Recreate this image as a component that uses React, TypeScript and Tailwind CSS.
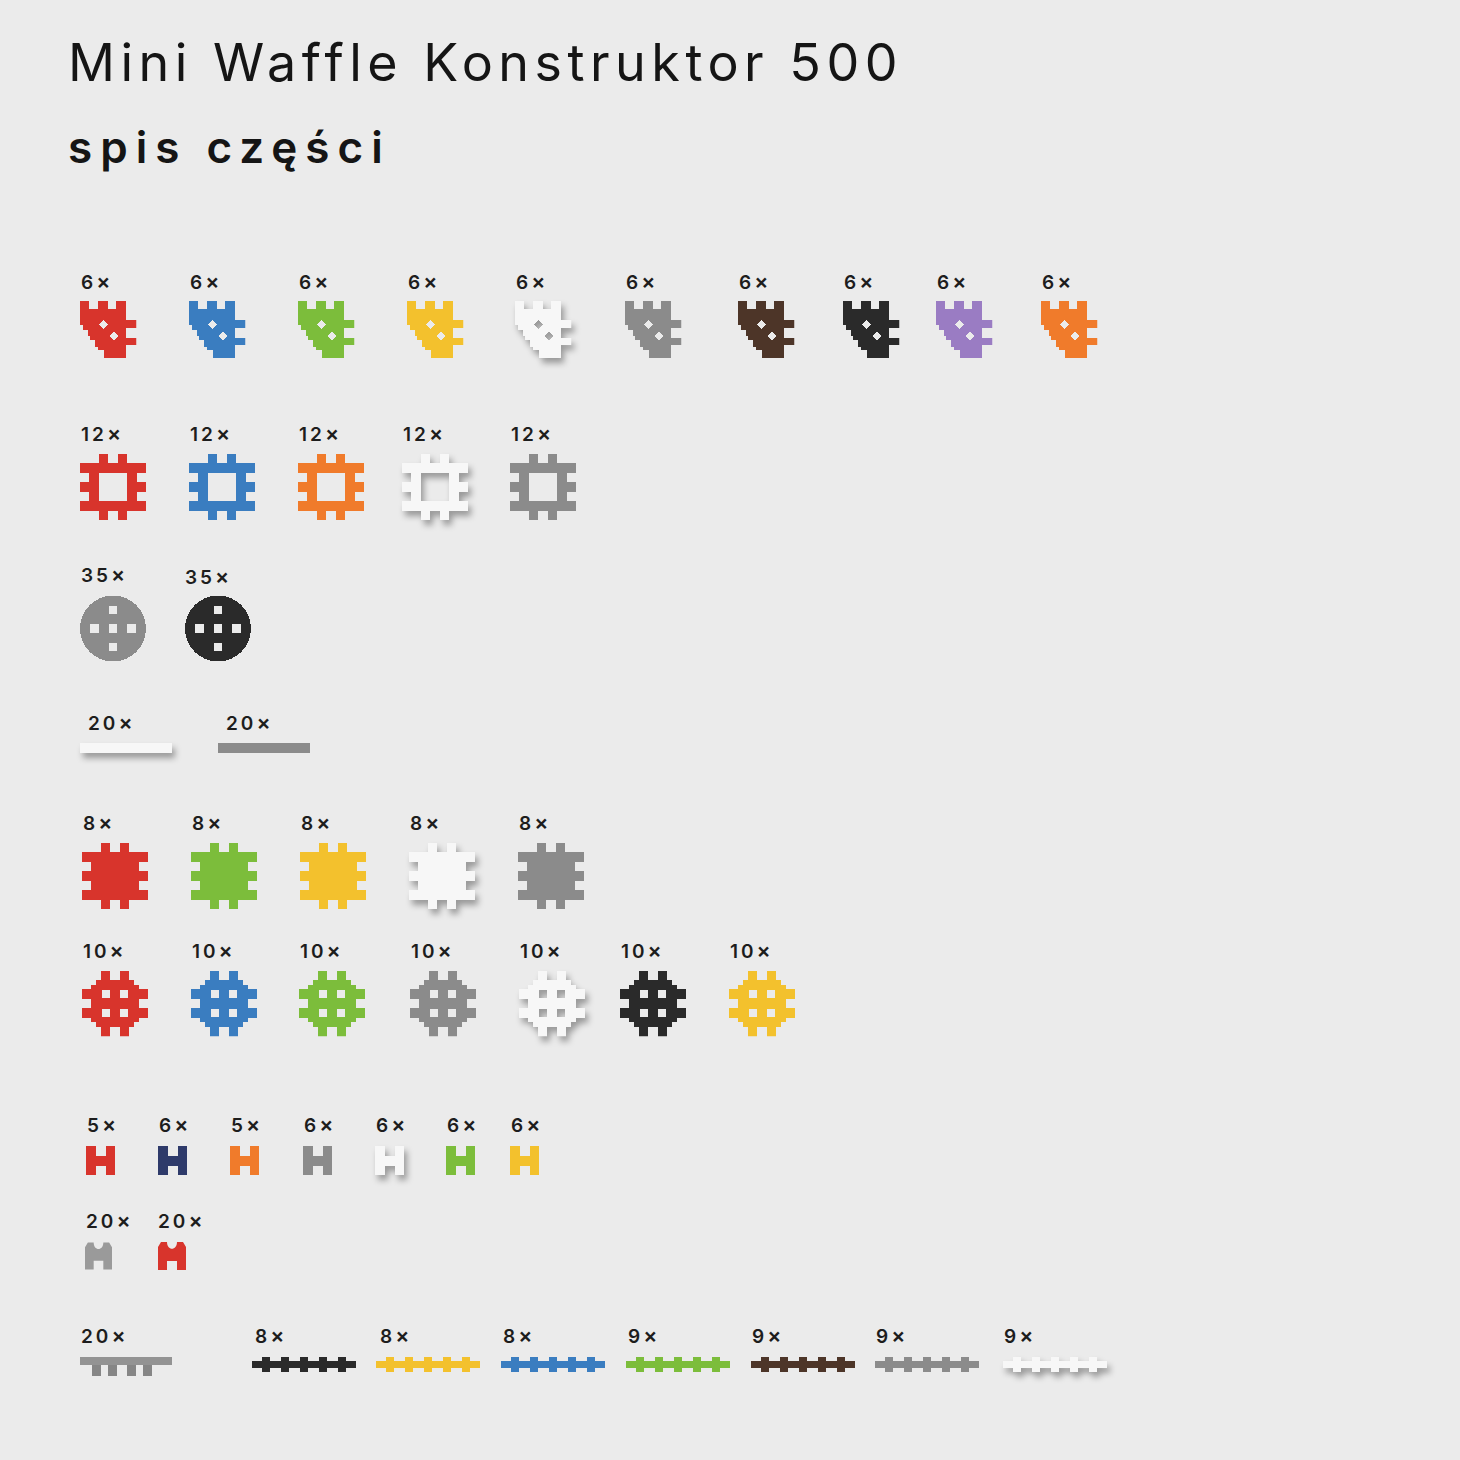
import React, { useId } from 'react';

const C = {
    red: '#d8342c',
    blue: '#3a7dc0',
    green: '#7cbd3b',
    yellow: '#f3c12d',
    white: '#f7f7f7',
    gray: '#8b8b8b',
    brown: '#4d3528',
    black: '#2a2a2a',
    purple: '#9a7cc3',
    orange: '#f07b2b',
    navy: '#2e3a6a',
};

const SHADOW = 'drop-shadow-[3px_5px_3px_rgba(0,0,0,0.35)]';

// generic masked shape: white = solid, black = hole
interface ShapeProps {
    w: number;
    h: number;
    vb: string;
    color: string;
    children: React.ReactNode;
}

const Shape: React.FC<ShapeProps> = ({ w, h, vb, color, children }) => {
    const id = useId().replace(/:/g, '');
    const isWhite = color === C.white;
    const [, , vw, vh] = vb.split(' ').map(Number);
    return (
        <svg width={w} height={h} viewBox={vb} className={isWhite ? SHADOW : ''} shapeRendering="crispEdges">
            <defs>
                <mask id={id} maskUnits="userSpaceOnUse" x="0" y="0" width={vw} height={vh}>
                    {children}
                </mask>
            </defs>
            <rect x="0" y="0" width={vw} height={vh} fill={color} mask={`url(#${id})`} />
        </svg>
    );
};

const W = 'white';
const B = 'black';

const tabsTop = [4, 8];
const tabsSide = [2, 6, 10];

const SquareBody = () => (
    <>
        <rect x="2" y="2" width="10" height="10" fill={W} />
        {tabsTop.map(x => (
            <React.Fragment key={x}>
                <rect x={x} y="0" width="2" height="2" fill={W} />
                <rect x={x} y="12" width="2" height="2" fill={W} />
            </React.Fragment>
        ))}
        {tabsSide.map(y => (
            <React.Fragment key={y}>
                <rect x="0" y={y} width="2" height="2" fill={W} />
                <rect x="12" y={y} width="2" height="2" fill={W} />
            </React.Fragment>
        ))}
    </>
);

const Diagonal = ({ color }: { color: string }) => (
    <Shape w={58} h={57} vb="0 0 12 12" color={color}>
        <polygon
            fill={W}
            points="0,0 2.1,0 2.1,1.6 3.8,1.6 3.8,0 6,0 6,1.6 7.6,1.6 7.6,0 9.7,0 9.7,3.9 12,3.9 12,5.6 9.7,5.6 9.7,7.7 12,7.7 12,9.3 9.7,9.3 9.7,12 5.2,12 5.2,10.4 3.9,10.4 3.9,9.6 3.3,9.6 3.3,8.3 2.3,8.3 2.3,7.4 1.7,7.4 1.7,6 0.8,6 0.8,5.1 0,5.1"
        />
        <polygon fill={B} points="5.1,3.95 6.05,4.9 5.1,5.85 4.15,4.9" />
        <polygon fill={B} points="7.2,6.45 8.15,7.4 7.2,8.35 6.25,7.4" />
    </Shape>
);

const Frame = ({ color }: { color: string }) => (
    <Shape w={68} h={66} vb="0 0 14 14" color={color}>
        <SquareBody />
        <rect x="4" y="4" width="6" height="6" fill={B} />
    </Shape>
);

const Solid = ({ color }: { color: string }) => (
    <Shape w={66} h={66} vb="0 0 14 14" color={color}>
        <SquareBody />
    </Shape>
);

const Hash = ({ color }: { color: string }) => (
    <Shape w={66} h={67} vb="0 0 14 14" color={color}>
        <rect x="3" y="2" width="8" height="10" fill={W} />
        <rect x="2" y="3" width="10" height="8" fill={W} />
        {tabsTop.map(p => (
            <React.Fragment key={p}>
                <rect x={p} y="0" width="2" height="2" fill={W} />
                <rect x={p} y="12" width="2" height="2" fill={W} />
                <rect x="0" y={p} width="2" height="2" fill={W} />
                <rect x="12" y={p} width="2" height="2" fill={W} />
            </React.Fragment>
        ))}
        {[4.2, 8.1].map(x =>
            [4.2, 8.1].map(y => <rect key={`${x}-${y}`} x={x} y={y} width="1.7" height="1.7" fill={B} />)
        )}
    </Shape>
);

const Disc = ({ color }: { color: string }) => (
    <Shape w={66} h={67} vb="0 0 66 66" color={color}>
        <circle cx="33" cy="33" r="33" fill={W} />
        {[[33, 33], [33, 14.5], [33, 51.5], [14.5, 33], [51.5, 33]].map(([x, y]) => (
            <rect key={`${x}-${y}`} x={x - 4.2} y={y - 4.2} width="8.4" height="8.4" fill={B} />
        ))}
    </Shape>
);

const Bar = ({ color }: { color: string }) => (
    <div
        className={`h-[10px] w-[92px] ${color === C.white ? `bg-[#f7f7f7] ${SHADOW}` : 'bg-[#8b8b8b]'}`}
    />
);

const HPiece = ({ color }: { color: string }) => (
    <Shape w={29} h={29} vb="0 0 29 29" color={color}>
        <rect x="0" y="0" width="9.5" height="29" fill={W} />
        <rect x="19.5" y="0" width="9.5" height="29" fill={W} />
        <rect x="0" y="9.5" width="29" height="10" fill={W} />
    </Shape>
);

const ArchPiece = ({ color, w }: { color: string; w: number }) => (
    <svg width={w} height={28} viewBox="0 0 28 28">
        <path
            d="M3 0 H9 C9 9 19 9 19 0 H25 L28 5 V28 H19 V19 H9 V28 H0 V5 Z"
            fill={color}
        />
    </svg>
);

const Comb = () => (
    <svg width={92} height={19} viewBox="0 0 92 19" shapeRendering="crispEdges">
        <rect x="0" y="0" width="92" height="8" fill="#939393" />
        {[12, 28, 47, 63].map(x => (
            <rect key={x} x={x} y="8" width="8.5" height="11" fill="#868686" />
        ))}
    </svg>
);

const Chain = ({ color }: { color: string }) => (
    <Shape w={104} h={15} vb="0 0 104 15" color={color}>
        <rect x="0" y="4" width="104" height="7" fill={W} />
        {[14, 33, 52, 71, 90].map(x => (
            <rect key={x} x={x - 4} y="0" width="8" height="15" fill={W} />
        ))}
    </Shape>
);

const Label = ({ text, className = '' }: { text: string; className?: string }) => (
    <span className={`block h-[20px] text-[19px] leading-[20px] font-semibold tracking-[3px] text-[#1d1d1d] ${className}`}>
        {text}
        <span className="text-[21px]">×</span>
    </span>
);

interface ItemProps {
    n: string;
    w: string;
    gap: string;
    labelPad?: string;
    children: React.ReactNode;
}

const Item: React.FC<ItemProps> = ({ n, w, gap, labelPad = 'pl-[2px]', children }) => (
    <div className={`flex shrink-0 flex-col items-start ${w}`}>
        <Label text={n} className={labelPad} />
        <div className={gap}>{children}</div>
    </div>
);

const row1 = [
    { c: C.red, w: 'w-[109px]' },
    { c: C.blue, w: 'w-[109px]' },
    { c: C.green, w: 'w-[109px]' },
    { c: C.yellow, w: 'w-[108px]' },
    { c: C.white, w: 'w-[110px]' },
    { c: C.gray, w: 'w-[113px]' },
    { c: C.brown, w: 'w-[105px]' },
    { c: C.black, w: 'w-[93px]' },
    { c: C.purple, w: 'w-[105px]' },
    { c: C.orange, w: 'w-[105px]' },
];

const row2 = [
    { c: C.red, w: 'w-[109px]' },
    { c: C.blue, w: 'w-[109px]' },
    { c: C.orange, w: 'w-[104px]' },
    { c: C.white, w: 'w-[108px]' },
    { c: C.gray, w: 'w-[108px]' },
];

const row5 = [C.red, C.green, C.yellow, C.white, C.gray];

const row6 = [
    { c: C.red, w: 'w-[109px]' },
    { c: C.blue, w: 'w-[108px]' },
    { c: C.green, w: 'w-[111px]' },
    { c: C.gray, w: 'w-[109px]' },
    { c: C.white, w: 'w-[101px]' },
    { c: C.black, w: 'w-[109px]' },
    { c: C.yellow, w: 'w-[109px]' },
];

const row7 = [
    { n: '5', c: C.red, w: 'w-[72px]' },
    { n: '6', c: C.navy, w: 'w-[72px]' },
    { n: '5', c: C.orange, w: 'w-[73px]' },
    { n: '6', c: C.gray, w: 'w-[72px]' },
    { n: '6', c: C.white, w: 'w-[71px]' },
    { n: '6', c: C.green, w: 'w-[64px]' },
    { n: '6', c: C.yellow, w: 'w-[64px]' },
];

const row9 = [
    { n: '8', c: C.black, w: 'w-[124px]', pad: 'pl-[3px]' },
    { n: '8', c: C.yellow, w: 'w-[125px]', pad: 'pl-[4px]' },
    { n: '8', c: C.blue, w: 'w-[125px]', pad: 'pl-[2px]' },
    { n: '9', c: C.green, w: 'w-[125px]', pad: 'pl-[2px]' },
    { n: '9', c: C.brown, w: 'w-[124px]', pad: 'pl-[1px]' },
    { n: '9', c: C.gray, w: 'w-[128px]', pad: 'pl-[1px]' },
    { n: '9', c: C.white, w: 'w-[128px]', pad: 'pl-[1px]' },
];

export default function App() {
    return (
        <div className="min-h-[1460px] w-full bg-[#ebebeb] font-['Inter','Liberation_Sans',sans-serif] text-[#151515]">
            <header className="pl-[68px] pt-[37px]">
                <h1 className="text-[52px] leading-[52px] font-normal tracking-[5.5px]">Mini Waffle Konstruktor 500</h1>
                <h2 className="mt-[36px] text-[44px] leading-[44px] font-semibold tracking-[8px]">spis części</h2>
            </header>

            <main className="flex flex-col">
                <section className="mt-[103px] flex pl-[79px]">
                    {row1.map((p, i) => (
                        <Item key={i} n="6" w={p.w} gap="mt-[9px]">
                            <Diagonal color={p.c} />
                        </Item>
                    ))}
                </section>

                <section className="mt-[66px] flex pl-[79px]">
                    {row2.map((p, i) => (
                        <Item key={i} n="12" w={p.w} gap="mt-[10px]">
                            <Frame color={p.c} />
                        </Item>
                    ))}
                </section>

                <section className="mt-[45px] flex pl-[80px]">
                    <Item n="35" w="w-[105px]" gap="mt-[10px]" labelPad="pl-[1px]">
                        <Disc color={C.gray} />
                    </Item>
                    <Item n="35" w="w-[105px]" gap="mt-[10px]" labelPad="pl-[0px] pt-[2px]">
                        <Disc color={C.black} />
                    </Item>
                </section>

                <section className="mt-[51px] flex pl-[80px]">
                    <Item n="20" w="w-[138px]" gap="mt-[10px]" labelPad="pl-[8px]">
                        <Bar color={C.white} />
                    </Item>
                    <Item n="20" w="w-[138px]" gap="mt-[10px]" labelPad="pl-[8px]">
                        <Bar color={C.gray} />
                    </Item>
                </section>

                <section className="mt-[60px] flex pl-[82px]">
                    {row5.map((c, i) => (
                        <Item key={i} n="8" w="w-[109px]" gap="mt-[10px]" labelPad="pl-[1px]">
                            <Solid color={c} />
                        </Item>
                    ))}
                </section>

                <section className="mt-[32px] flex pl-[82px]">
                    {row6.map((p, i) => (
                        <Item key={i} n="10" w={p.w} gap="mt-[9px]" labelPad="pl-[1px]">
                            <Hash color={p.c} />
                        </Item>
                    ))}
                </section>

                <section className="mt-[78px] flex pl-[86px]">
                    {row7.map((p, i) => (
                        <Item key={i} n={p.n} w={p.w} gap="mt-[11px]" labelPad="pl-[1px]">
                            <HPiece color={p.c} />
                        </Item>
                    ))}
                </section>

                <section className="mt-[36px] flex pl-[85px]">
                    <Item n="20" w="w-[72px]" gap="mt-[11px]" labelPad="pl-[1px]">
                        <ArchPiece color="#9a9a9a" w={27} />
                    </Item>
                    <Item n="20" w="w-[72px]" gap="mt-[11px]" labelPad="pl-[1px]">
                        <ArchPiece color={C.red} w={30} />
                    </Item>
                </section>

                <section className="mt-[56px] flex pl-[80px]">
                    <Item n="20" w="w-[172px]" gap="mt-[11px]" labelPad="pl-[1px]">
                        <Comb />
                    </Item>
                    {row9.map((p, i) => (
                        <Item key={i} n={p.n} w={p.w} gap="mt-[11px]" labelPad={p.pad}>
                            <Chain color={p.c} />
                        </Item>
                    ))}
                </section>
            </main>
        </div>
    );
}
